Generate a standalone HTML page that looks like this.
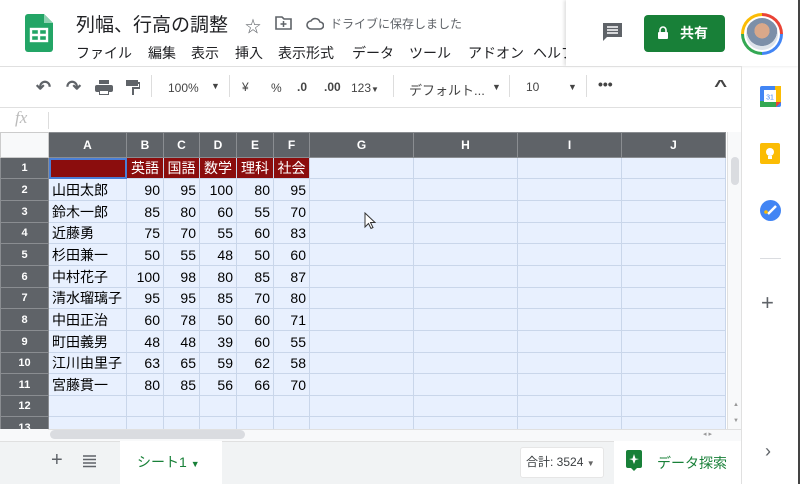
<!DOCTYPE html>
<html><head><meta charset="utf-8"><style>
*{margin:0;padding:0;box-sizing:border-box}
body{width:800px;height:484px;overflow:hidden;background:#fff;font-family:"Liberation Sans","Noto Sans CJK JP",sans-serif;position:relative;color:#3c4043}
.a{position:absolute}
.menu span{position:absolute;top:0}
table{border-collapse:collapse;table-layout:fixed;position:absolute;left:0;top:132px}
td{border:1px solid #c9d6ea;font-size:14px;color:#000;overflow:hidden;white-space:nowrap;padding:0 3px;background:#e8f0fe;text-align:right}
td.h{background:#5f6368;color:#fff;text-align:center;font-size:11px;font-weight:bold;border-color:#8a8d91}
tr.hd td{background:#5f6368;color:#fff;text-align:center;font-size:12px;font-weight:bold;border-color:#8a8d91;height:25px}
td.n{text-align:left}
tr.r1 td.c{background:#8b0d0d;color:#fff;text-align:center;padding:0}
.tb{font-size:12px;color:#444}
</style></head><body>
<!-- header -->
<svg class="a" style="left:25px;top:14px" width="28" height="38" viewBox="0 0 28 38"><path d="M3 0h16l9 9v26a3 3 0 0 1-3 3H3a3 3 0 0 1-3-3V3a3 3 0 0 1 3-3z" fill="#23a566"/><path d="M19 0v9h9z" fill="#8ed1b1"/><rect x="6" y="15" width="16" height="12" fill="none" stroke="#fff" stroke-width="2.4"/><path d="M6 21h16M14 15v12" stroke="#fff" stroke-width="2.4"/></svg>
<div class="a" style="left:76px;top:10px;font-size:19px;color:#202124">列幅、行高の調整</div>
<div class="a" style="left:245px;top:13px;font-size:16px;color:#5f6368">☆</div>
<svg class="a" style="left:275px;top:16px" width="17" height="14"><path d="M1 1h6l2 2h7v10H1z" fill="none" stroke="#5f6368" stroke-width="1.6"/><path d="M8.5 5v6M5.5 8h6" stroke="#5f6368" stroke-width="1.5"/></svg>
<svg class="a" style="left:306px;top:17px" width="18" height="13"><path d="M5 12a4 4 0 0 1 0-8 5 5 0 0 1 9 1 3.5 3.5 0 0 1 0 7z" fill="none" stroke="#5f6368" stroke-width="1.6"/></svg>
<div class="a" style="left:330px;top:15px;font-size:12px;color:#5f6368">ドライブに保存しました</div>
<div class="a menu" style="left:0;top:43px;font-size:14px;color:#202124;white-space:nowrap;width:566px;height:22px;overflow:hidden"><span style="left:76px">ファイル</span><span style="left:148px">編集</span><span style="left:191px">表示</span><span style="left:235px">挿入</span><span style="left:278px">表示形式</span><span style="left:352px">データ</span><span style="left:409px">ツール</span><span style="left:468px">アドオン</span><span style="left:533px">ヘルプ</span></div>
<div class="a" style="left:566px;top:0;width:234px;height:66px;background:#fff;box-shadow:-2px 0 3px rgba(0,0,0,.12)"></div>
<svg class="a" style="left:602px;top:22px" width="21" height="21"><path d="M1 1h19v14H5l-4 4z" fill="#5f6368"/><path d="M5 5h11M5 8h11M5 11h11" stroke="#fff" stroke-width="1.4"/></svg>
<div class="a" style="left:644px;top:15px;width:81px;height:37px;background:#188038;border-radius:4px;color:#fff;font-size:14px;font-weight:bold;line-height:37px;text-align:right;padding-right:17px">共有</div>
<svg class="a" style="left:657px;top:26px" width="12" height="14"><rect x="1" y="6" width="10" height="7" rx="1" fill="#fff"/><path d="M3 6V4a3 3 0 0 1 6 0v2" fill="none" stroke="#fff" stroke-width="1.6"/></svg>
<div class="a" style="left:741px;top:13px;width:42px;height:42px;border-radius:50%;background:conic-gradient(#ea4335 0 25%,#4285f4 25% 50%,#34a853 50% 75%,#fbbc05 75%)"></div>
<div class="a" style="left:744px;top:16px;width:36px;height:36px;border-radius:50%;background:#fff"></div>
<div class="a" style="left:746px;top:18px;width:32px;height:32px;border-radius:50%;background:radial-gradient(circle at 50% 40%,#d9a88a 0 30%,#7c8fa8 31% 60%,#dde3ea 61%)"></div>
<!-- toolbar -->
<div class="a" style="left:0;top:66px;width:741px;height:1px;background:#e0e0e0"></div>
<div class="a" style="left:0;top:107px;width:741px;height:1px;background:#e0e0e0"></div>
<div class="a tb" style="left:36px;top:77px;font-size:18px;color:#5f6368;font-weight:bold">↶</div>
<div class="a tb" style="left:66px;top:77px;font-size:18px;color:#5f6368;font-weight:bold">↷</div>
<svg class="a" style="left:95px;top:80px" width="18" height="16"><rect x="4" y="0" width="10" height="4" fill="#5f6368"/><rect x="0" y="5" width="18" height="7" rx="2" fill="#5f6368"/><rect x="4" y="10" width="10" height="5" fill="#5f6368"/><rect x="5" y="11" width="8" height="3" fill="#fff"/></svg>
<svg class="a" style="left:126px;top:80px" width="14" height="16"><rect x="0" y="0" width="12" height="6" fill="#5f6368"/><path d="M12 3h2v5H7v7" fill="none" stroke="#5f6368" stroke-width="2"/></svg>
<div class="a" style="left:151px;top:75px;width:1px;height:22px;background:#ddd"></div>
<div class="a tb" style="left:168px;top:81px">100%</div><div class="a tb" style="left:211px;top:81px;font-size:9px">▼</div>
<div class="a" style="left:229px;top:75px;width:1px;height:22px;background:#ddd"></div>
<div class="a tb" style="left:242px;top:80px">¥</div>
<div class="a tb" style="left:271px;top:81px">%</div>
<div class="a tb" style="left:297px;top:80px;font-weight:bold">.0</div>
<div class="a tb" style="left:324px;top:80px;font-weight:bold">.00</div>
<div class="a tb" style="left:351px;top:81px">123<span style="font-size:8px">▼</span></div>
<div class="a" style="left:393px;top:75px;width:1px;height:22px;background:#ddd"></div>
<div class="a tb" style="left:409px;top:80px;font-size:13px">デフォルト...</div><div class="a tb" style="left:492px;top:82px;font-size:9px">▼</div>
<div class="a" style="left:509px;top:75px;width:1px;height:22px;background:#ddd"></div>
<div class="a tb" style="left:526px;top:80px">10</div><div class="a tb" style="left:568px;top:82px;font-size:9px">▼</div>
<div class="a" style="left:586px;top:75px;width:1px;height:22px;background:#ddd"></div>
<div class="a tb" style="left:598px;top:76px;font-weight:bold;font-size:14px">•••</div>
<div class="a tb" style="left:716px;top:78px;font-size:16px;font-weight:bold;transform:scaleX(1.4)">^</div>
<!-- formula bar -->
<div class="a" style="left:15px;top:108px;font-size:17px;font-style:italic;color:#bbb;font-family:'Liberation Serif',serif">fx</div>
<div class="a" style="left:48px;top:112px;width:1px;height:17px;background:#ddd"></div>
<table>
<colgroup><col style="width:48px"><col style="width:78px"><col style="width:37px"><col style="width:36px"><col style="width:37px"><col style="width:37px"><col style="width:36px"><col style="width:104px"><col style="width:104px"><col style="width:104px"><col style="width:104px"></colgroup>
<tr class="hd"><td style="background:#f8f9fa;border-color:#ccc"></td><td>A</td><td>B</td><td>C</td><td>D</td><td>E</td><td>F</td><td>G</td><td>H</td><td>I</td><td>J</td></tr>
<tr class="r1" style="height:21px"><td class="h">1</td><td class="c" style="outline:2px solid #4a7fd6;outline-offset:-2px"></td><td class="c">英語</td><td class="c">国語</td><td class="c">数学</td><td class="c">理科</td><td class="c">社会</td><td></td><td></td><td></td><td></td></tr>
<tr style="height:22px"><td class="h">2</td><td class="n">山田太郎</td><td>90</td><td>95</td><td>100</td><td>80</td><td>95</td><td></td><td></td><td></td><td></td></tr>
<tr style="height:22px"><td class="h">3</td><td class="n">鈴木一郎</td><td>85</td><td>80</td><td>60</td><td>55</td><td>70</td><td></td><td></td><td></td><td></td></tr>
<tr style="height:21px"><td class="h">4</td><td class="n">近藤勇</td><td>75</td><td>70</td><td>55</td><td>60</td><td>83</td><td></td><td></td><td></td><td></td></tr>
<tr style="height:22px"><td class="h">5</td><td class="n">杉田兼一</td><td>50</td><td>55</td><td>48</td><td>50</td><td>60</td><td></td><td></td><td></td><td></td></tr>
<tr style="height:22px"><td class="h">6</td><td class="n">中村花子</td><td>100</td><td>98</td><td>80</td><td>85</td><td>87</td><td></td><td></td><td></td><td></td></tr>
<tr style="height:21px"><td class="h">7</td><td class="n">清水瑠璃子</td><td>95</td><td>95</td><td>85</td><td>70</td><td>80</td><td></td><td></td><td></td><td></td></tr>
<tr style="height:22px"><td class="h">8</td><td class="n">中田正治</td><td>60</td><td>78</td><td>50</td><td>60</td><td>71</td><td></td><td></td><td></td><td></td></tr>
<tr style="height:22px"><td class="h">9</td><td class="n">町田義男</td><td>48</td><td>48</td><td>39</td><td>60</td><td>55</td><td></td><td></td><td></td><td></td></tr>
<tr style="height:21px"><td class="h">10</td><td class="n">江川由里子</td><td>63</td><td>65</td><td>59</td><td>62</td><td>58</td><td></td><td></td><td></td><td></td></tr>
<tr style="height:22px"><td class="h">11</td><td class="n">宮藤貫一</td><td>80</td><td>85</td><td>56</td><td>66</td><td>70</td><td></td><td></td><td></td><td></td></tr>
<tr style="height:21px"><td class="h">12</td><td></td><td></td><td></td><td></td><td></td><td></td><td></td><td></td><td></td><td></td></tr>
<tr style="height:22px"><td class="h">13</td><td></td><td></td><td></td><td></td><td></td><td></td><td></td><td></td><td></td><td></td></tr>
</table>
<!-- cursor -->
<svg class="a" style="left:364px;top:212px" width="12" height="18"><path d="M1 1v14l3.5-3.5 2.5 5 2-1-2.5-5H11z" fill="#fff" stroke="#333" stroke-width="1"/></svg>
<!-- v scrollbar -->
<div class="a" style="left:727px;top:132px;width:14px;height:298px;background:#f8f9fa;border-left:1px solid #e0e0e0"></div>
<div class="a" style="left:731px;top:157px;width:8px;height:28px;background:#dadce0;border-radius:4px"></div>
<div class="a" style="left:733px;top:402px;font-size:6px;color:#999">▲</div>
<div class="a" style="left:733px;top:418px;font-size:6px;color:#999">▼</div>
<!-- h scrollbar -->
<div class="a" style="left:48px;top:429px;width:693px;height:12px;background:#f8f9fa;border-top:1px solid #e0e0e0"></div>
<div class="a" style="left:50px;top:430px;width:195px;height:9px;background:#dadce0;border-radius:5px"></div>
<div class="a" style="left:0;top:429px;width:48px;height:12px;background:#f8f9fa"></div>
<div class="a" style="left:703px;top:430px;font-size:7px;color:#999">◂ ▸</div>
<!-- bottom bar -->
<div class="a" style="left:0;top:441px;width:741px;height:43px;background:#f1f3f4;border-top:1px solid #e0e0e0"></div>
<div class="a" style="left:51px;top:449px;font-size:20px;color:#5f6368">+</div>
<svg class="a" style="left:83px;top:455px" width="13" height="13"><path d="M0 1h13M0 4.5h13M0 8h13M0 11.5h13" stroke="#5f6368" stroke-width="1.6"/></svg>
<div class="a" style="left:120px;top:441px;width:102px;height:43px;background:#fff"></div>
<div class="a" style="left:137px;top:452px;font-size:14px;color:#188038">シート1 <span style="font-size:9px">▼</span></div>
<div class="a" style="left:520px;top:447px;width:84px;height:31px;background:#fff;border:1px solid #e6e6e6;border-radius:3px;font-size:12px;color:#3c4043;line-height:29px;padding-left:5px">合計: 3524 <span style="font-size:8px;color:#666">▼</span></div>
<div class="a" style="left:614px;top:441px;width:127px;height:43px;background:#fff"></div>
<svg class="a" style="left:626px;top:450px" width="16" height="22"><path d="M2 0h12a2 2 0 0 1 2 2v14a2 2 0 0 1-2 2h-3l-3 3-3-3H2a2 2 0 0 1-2-2V2a2 2 0 0 1 2-2z" fill="#188038"/><path d="M8 4l1.5 4.5L13 9l-3.5 1L8 14l-1.5-4L3 9l3.5-.5z" fill="#fff"/></svg>
<div class="a" style="left:657px;top:453px;font-size:14px;color:#188038">データ探索</div>
<!-- side panel -->
<div class="a" style="left:741px;top:66px;width:1px;height:418px;background:#e0e0e0"></div>
<svg class="a" style="left:760px;top:86px" width="21" height="21"><rect width="21" height="21" rx="2" fill="#4285f4"/><rect x="0" y="15" width="16" height="6" fill="#34a853"/><rect x="15" y="0" width="6" height="16" fill="#fbbc04"/><path d="M16 16h5l-5 5z" fill="#ea4335"/><rect x="4" y="4" width="12" height="12" fill="#fff"/><text x="10" y="13.5" font-size="7" text-anchor="middle" fill="#4285f4" font-family="Liberation Sans">31</text></svg>
<svg class="a" style="left:760px;top:143px" width="20" height="21"><rect width="20" height="21" rx="2" fill="#fbbc04"/><circle cx="10" cy="9" r="4" fill="#fff"/><rect x="8" y="13" width="4" height="3" fill="#fff"/></svg>
<svg class="a" style="left:760px;top:200px" width="21" height="21"><circle cx="10.5" cy="10.5" r="10.5" fill="#4285f4"/><path d="M8 14l8-8" stroke="#fff" stroke-width="2.5"/><circle cx="6" cy="12" r="1.8" fill="#fbbc04"/></svg>
<div class="a" style="left:760px;top:258px;width:21px;height:1px;background:#dadce0"></div>
<div class="a" style="left:761px;top:290px;font-size:22px;color:#5f6368">+</div>
<div class="a" style="left:765px;top:441px;font-size:18px;color:#5f6368">›</div>
<div class="a" style="left:798px;top:0;width:2px;height:484px;background:#444"></div>
</body></html>
